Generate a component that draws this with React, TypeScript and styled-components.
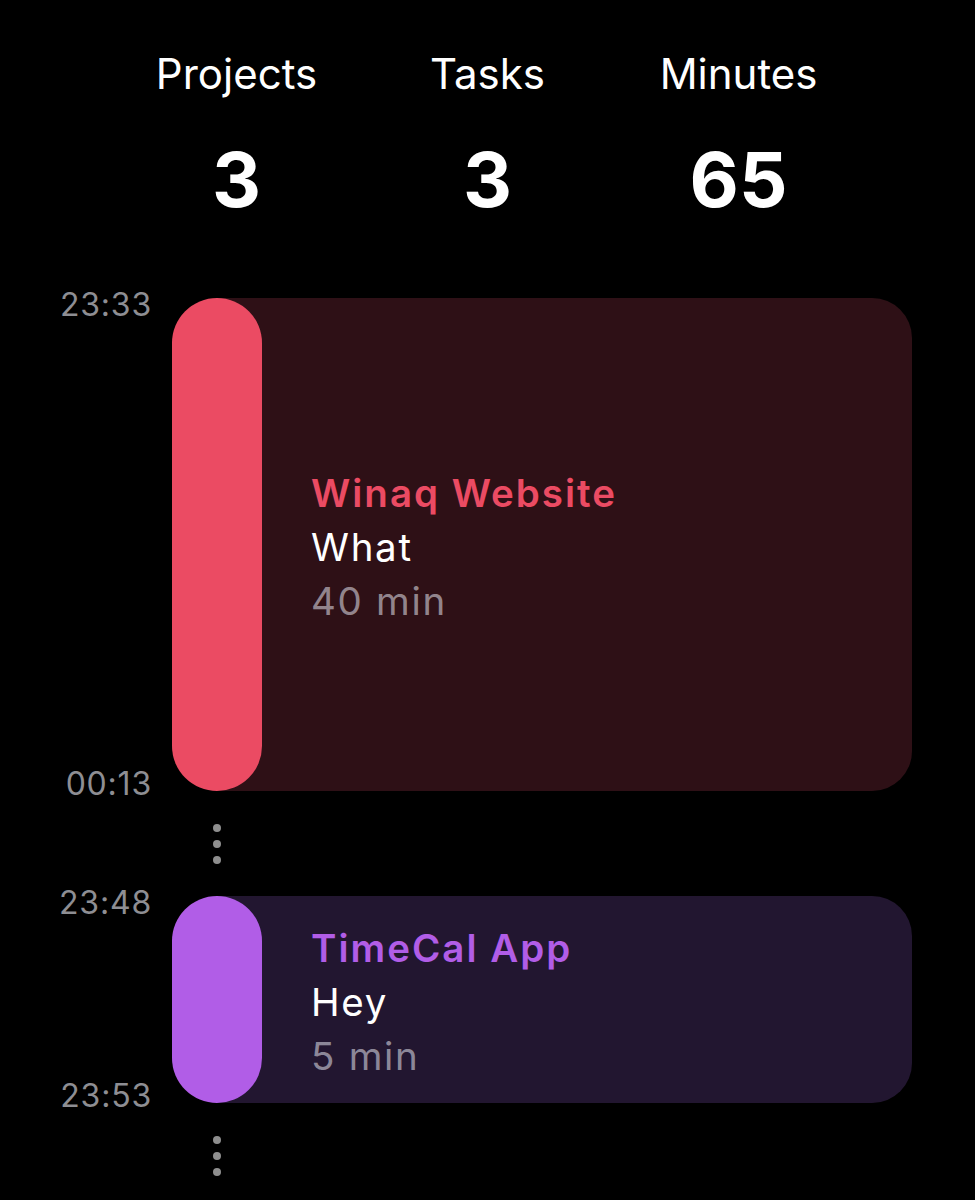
import React from "react";
import styled, { createGlobalStyle } from "styled-components";

const GlobalStyle = createGlobalStyle`
  html, body {
    margin: 0;
    padding: 0;
    background: #000;
  }
  body {
    font-family: Inter, "Noto Sans", "Liberation Sans", sans-serif;
    color: #fff;
    -webkit-font-smoothing: antialiased;
  }
`;

const Page = styled.main`
  width: 975px;
  padding-top: 53px;
`;

const Stats = styled.section`
  display: grid;
  grid-template-columns: repeat(3, 251px);
  justify-content: center;
`;

const Stat = styled.div`
  display: flex;
  flex-direction: column;
  align-items: center;
  gap: 46px;
`;

const StatLabel = styled.span`
  font-size: 42px;
  line-height: 42px;
  font-weight: 400;
  color: #fff;
`;

const StatValue = styled.span`
  font-size: 76px;
  line-height: 76px;
  font-weight: 700;
  color: #fff;
`;

const Timeline = styled.section`
  margin-top: 81px;
  display: flex;
  flex-direction: column;
`;

const Row = styled.div<{ $height: number }>`
  display: grid;
  grid-template-columns: 152px 740px;
  column-gap: 20px;
  height: ${(p) => p.$height}px;
`;

const Times = styled.div`
  margin: -8px 0;
  display: flex;
  flex-direction: column;
  justify-content: space-between;
  align-items: flex-end;
`;

const Time = styled.span`
  font-size: 32px;
  line-height: 30px;
  letter-spacing: 0.8px;
  color: #8e8e93;
`;

const Card = styled.div<{ $bg: string }>`
  display: flex;
  border-radius: 0 40px 40px 0;
  background: linear-gradient(
    to right,
    transparent 45px,
    ${(p) => p.$bg} 45px
  );
`;

const Bar = styled.div<{ $color: string }>`
  width: 90px;
  flex: none;
  border-radius: 45px;
  background: ${(p) => p.$color};
`;

const Body = styled.div`
  flex: 1;
  display: flex;
  flex-direction: column;
  justify-content: center;
  padding: 5px 0 0 49px;
`;

const Line = styled.span`
  font-size: 38.5px;
  line-height: 54px;
  letter-spacing: 1.7px;
`;

const Project = styled(Line)<{ $color: string }>`
  font-weight: 600;
  letter-spacing: 2px;
  color: ${(p) => p.$color};
`;

const Task = styled(Line)`
  color: #fff;
`;

const Duration = styled(Line)`
  color: rgba(235, 235, 245, 0.55);
`;

const Connector = styled.div`
  display: grid;
  grid-template-columns: 152px 90px;
  column-gap: 20px;
  height: 105px;
`;

const Dots = styled.div`
  grid-column: 2;
  display: flex;
  flex-direction: column;
  align-items: center;
  justify-content: center;
  gap: 8px;
`;

const Dot = styled.span`
  width: 8px;
  height: 8px;
  border-radius: 50%;
  background: #8e8e8e;
`;

type Entry = {
  start: string;
  end: string;
  project: string;
  task: string;
  minutes: number;
  color: string;
  bg: string;
  height: number;
};

const entries: Entry[] = [
  {
    start: "23:33",
    end: "00:13",
    project: "Winaq Website",
    task: "What",
    minutes: 40,
    color: "#eb4b63",
    bg: "#2e1016",
    height: 493,
  },
  {
    start: "23:48",
    end: "23:53",
    project: "TimeCal App",
    task: "Hey",
    minutes: 5,
    color: "#b15de7",
    bg: "#221630",
    height: 207,
  },
];

export default function App() {
  return (
    <>
      <GlobalStyle />
      <Page>
        <Stats>
          <Stat>
            <StatLabel>Projects</StatLabel>
            <StatValue>3</StatValue>
          </Stat>
          <Stat>
            <StatLabel>Tasks</StatLabel>
            <StatValue>3</StatValue>
          </Stat>
          <Stat>
            <StatLabel>Minutes</StatLabel>
            <StatValue>65</StatValue>
          </Stat>
        </Stats>
        <Timeline>
          {entries.map((e) => (
            <React.Fragment key={e.start + e.project}>
              <Row $height={e.height}>
                <Times>
                  <Time>{e.start}</Time>
                  <Time>{e.end}</Time>
                </Times>
                <Card $bg={e.bg}>
                  <Bar $color={e.color} />
                  <Body>
                    <Project $color={e.color}>{e.project}</Project>
                    <Task>{e.task}</Task>
                    <Duration>{e.minutes} min</Duration>
                  </Body>
                </Card>
              </Row>
              <Connector>
                <Dots>
                  <Dot />
                  <Dot />
                  <Dot />
                </Dots>
              </Connector>
            </React.Fragment>
          ))}
        </Timeline>
      </Page>
    </>
  );
}
